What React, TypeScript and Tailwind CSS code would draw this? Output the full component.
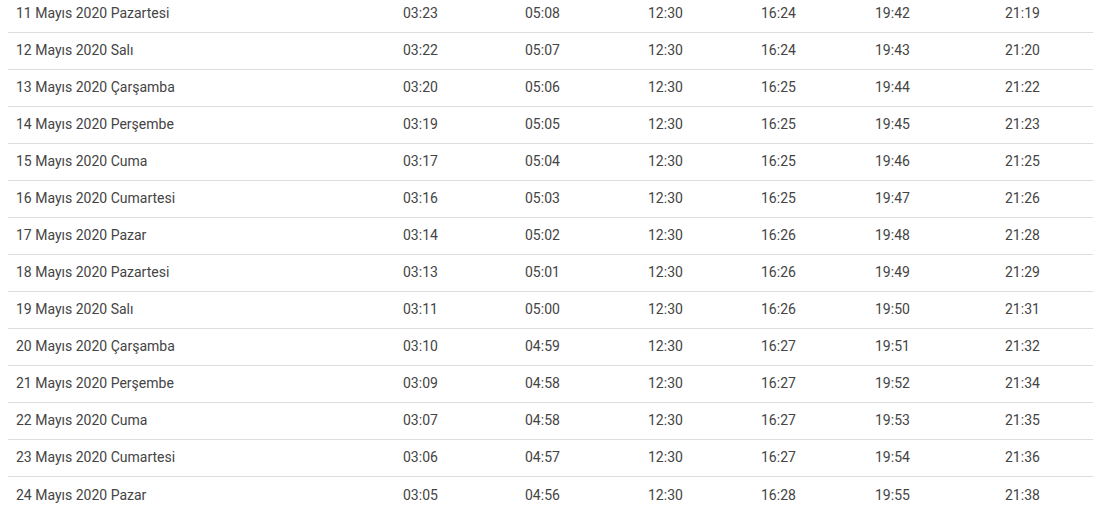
import React from "react";

const rows: string[][] = [
  ["11 Mayıs 2020 Pazartesi", "03:23", "05:08", "12:30", "16:24", "19:42", "21:19"],
  ["12 Mayıs 2020 Salı", "03:22", "05:07", "12:30", "16:24", "19:43", "21:20"],
  ["13 Mayıs 2020 Çarşamba", "03:20", "05:06", "12:30", "16:25", "19:44", "21:22"],
  ["14 Mayıs 2020 Perşembe", "03:19", "05:05", "12:30", "16:25", "19:45", "21:23"],
  ["15 Mayıs 2020 Cuma", "03:17", "05:04", "12:30", "16:25", "19:46", "21:25"],
  ["16 Mayıs 2020 Cumartesi", "03:16", "05:03", "12:30", "16:25", "19:47", "21:26"],
  ["17 Mayıs 2020 Pazar", "03:14", "05:02", "12:30", "16:26", "19:48", "21:28"],
  ["18 Mayıs 2020 Pazartesi", "03:13", "05:01", "12:30", "16:26", "19:49", "21:29"],
  ["19 Mayıs 2020 Salı", "03:11", "05:00", "12:30", "16:26", "19:50", "21:31"],
  ["20 Mayıs 2020 Çarşamba", "03:10", "04:59", "12:30", "16:27", "19:51", "21:32"],
  ["21 Mayıs 2020 Perşembe", "03:09", "04:58", "12:30", "16:27", "19:52", "21:34"],
  ["22 Mayıs 2020 Cuma", "03:07", "04:58", "12:30", "16:27", "19:53", "21:35"],
  ["23 Mayıs 2020 Cumartesi", "03:06", "04:57", "12:30", "16:27", "19:54", "21:36"],
  ["24 Mayıs 2020 Pazar", "03:05", "04:56", "12:30", "16:28", "19:55", "21:38"],
];

export default function App() {
  return (
    <div
      className="w-[1094px] h-[519px] overflow-hidden bg-white text-[#444] text-[14px]"
      style={{ fontFamily: "Roboto, 'Liberation Sans', sans-serif" }}
    >
      <div className="ml-[8px] mr-[1px] -mt-[4px]">
        {rows.map((r, i) => (
          <div
            key={i}
            className={`grid grid-cols-[387px_122px_123px_113px_114px_130px_1fr] h-[37px] pb-[2px] items-center ${
              i < rows.length - 1 ? "border-b border-[#dddddd]" : ""
            }`}
          >
            {r.map((c, j) => (
              <div key={j} className="pl-[8px] leading-[20px] whitespace-nowrap">
                {c}
              </div>
            ))}
          </div>
        ))}
      </div>
    </div>
  );
}
